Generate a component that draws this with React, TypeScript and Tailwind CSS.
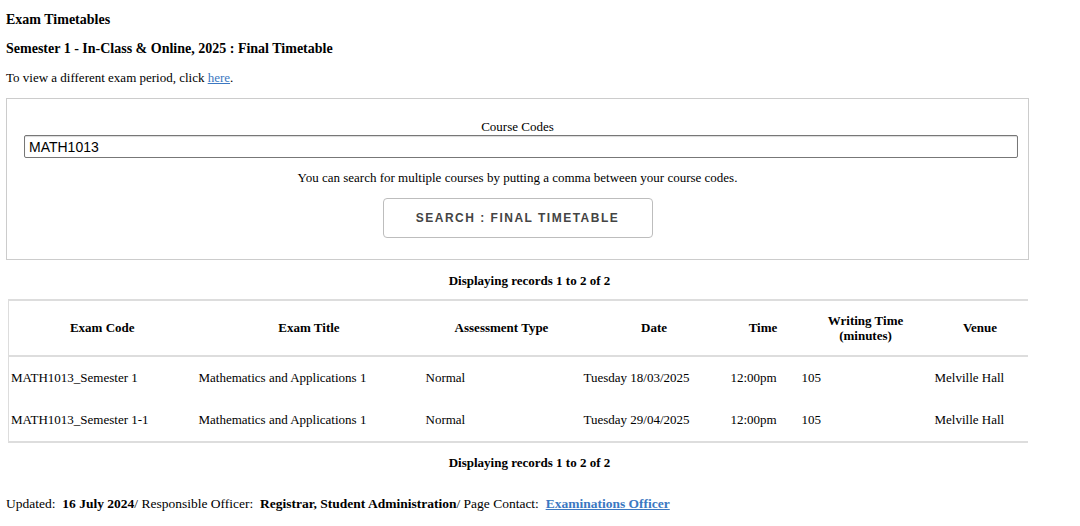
const rows = [
  {
    code: 'MATH1013_Semester 1',
    title: 'Mathematics and Applications 1',
    type: 'Normal',
    date: 'Tuesday 18/03/2025',
    time: '12:00pm',
    writing: '105',
    venue: 'Melville Hall',
  },
  {
    code: 'MATH1013_Semester 1-1',
    title: 'Mathematics and Applications 1',
    type: 'Normal',
    date: 'Tuesday 29/04/2025',
    time: '12:00pm',
    writing: '105',
    venue: 'Melville Hall',
  },
];

function RecordCount() {
  return (
    <p className="w-[1059px] text-center font-bold text-[13px] leading-[16px]">
      Displaying records 1 to 2 of 2
    </p>
  );
}

export default function App() {
  return (
    <div className="min-h-[526px] bg-white text-black font-['Liberation_Serif','Times_New_Roman',serif] text-[13px]">
      <div className="pt-[12px]">
        <h1 className="pl-[6px] font-bold text-[14px] leading-[16px]">Exam Timetables</h1>
        <h2 className="pl-[6px] mt-[13px] font-bold text-[14px] leading-[16px]">
          Semester 1 - In-Class &amp; Online, 2025 : Final Timetable
        </h2>
        <p className="pl-[6px] mt-[13px] leading-[16px]">
          To view a different exam period, click{' '}
          <a href="#" className="text-[#3b78c2] underline">
            here
          </a>
          .
        </p>

        <div className="ml-[6px] mt-[12px] w-[1023px] h-[162px] border border-[#cccccc] flex flex-col items-center">
          <label className="mt-[20px] leading-[16px]">Course Codes</label>
          <input
            type="text"
            defaultValue="MATH1013"
            className="self-start ml-[17px] w-[994px] h-[23px] border border-[#777] rounded-[2px] px-[4px] text-[14px] font-['Liberation_Sans',Arial,sans-serif] shadow-[inset_0_1px_1px_rgba(0,0,0,0.15)] outline-none"
          />
          <p className="mt-[12px] leading-[16px]">
            You can search for multiple courses by putting a comma between your course codes.
          </p>
          <button className="mt-[12px] w-[270px] h-[40px] border border-[#bdbdbd] rounded-[4px] bg-white text-[#444] font-bold text-[12px] tracking-[1.5px] font-['Liberation_Sans',Arial,sans-serif]">
            SEARCH : FINAL TIMETABLE
          </button>
        </div>

        <div className="mt-[13px]">
          <RecordCount />
        </div>

        <table className="ml-[8px] mt-[10px] w-[1019px] table-fixed border-collapse border-l border-l-[#dddddd]">
          <colgroup>
            <col className="w-[187px]" />
            <col className="w-[227px]" />
            <col className="w-[158px]" />
            <col className="w-[147px]" />
            <col className="w-[71px]" />
            <col className="w-[134px]" />
            <col className="w-[95px]" />
          </colgroup>
          <thead>
            <tr className="h-[56px] border-y-2 border-[#dddddd]">
              <th className="font-bold text-center">Exam Code</th>
              <th className="font-bold text-center">Exam Title</th>
              <th className="font-bold text-center">Assessment Type</th>
              <th className="font-bold text-center">Date</th>
              <th className="font-bold text-center">Time</th>
              <th className="font-bold text-center leading-[15px]">
                Writing Time
                <br />
                (minutes)
              </th>
              <th className="font-bold text-center">Venue</th>
            </tr>
          </thead>
          <tbody>
            {rows.map((r, i) => (
              <tr key={r.code} className={i === rows.length - 1 ? 'h-[43px] border-b-2 border-[#dddddd]' : 'h-[43px]'}>
                <td className="pl-[2px]">{r.code}</td>
                <td className="pl-[3px]">{r.title}</td>
                <td className="pl-[3px]">{r.type}</td>
                <td className="pl-[3px]">{r.date}</td>
                <td className="pl-[3px]">{r.time}</td>
                <td className="pl-[3px]">{r.writing}</td>
                <td className="pl-[2px]">{r.venue}</td>
              </tr>
            ))}
          </tbody>
        </table>

        <div className="mt-[12px]">
          <RecordCount />
        </div>

        <p className="pl-[6px] mt-[25px] text-[13.5px] leading-[16px] whitespace-pre">
          {'Updated:  '}
          <b>16 July 2024</b>
          {'/ Responsible Officer:  '}
          <b>Registrar, Student Administration</b>
          {'/ Page Contact:  '}
          <a href="#" className="font-bold text-[#3b78c2] underline">
            Examinations Officer
          </a>
        </p>
      </div>
    </div>
  );
}
